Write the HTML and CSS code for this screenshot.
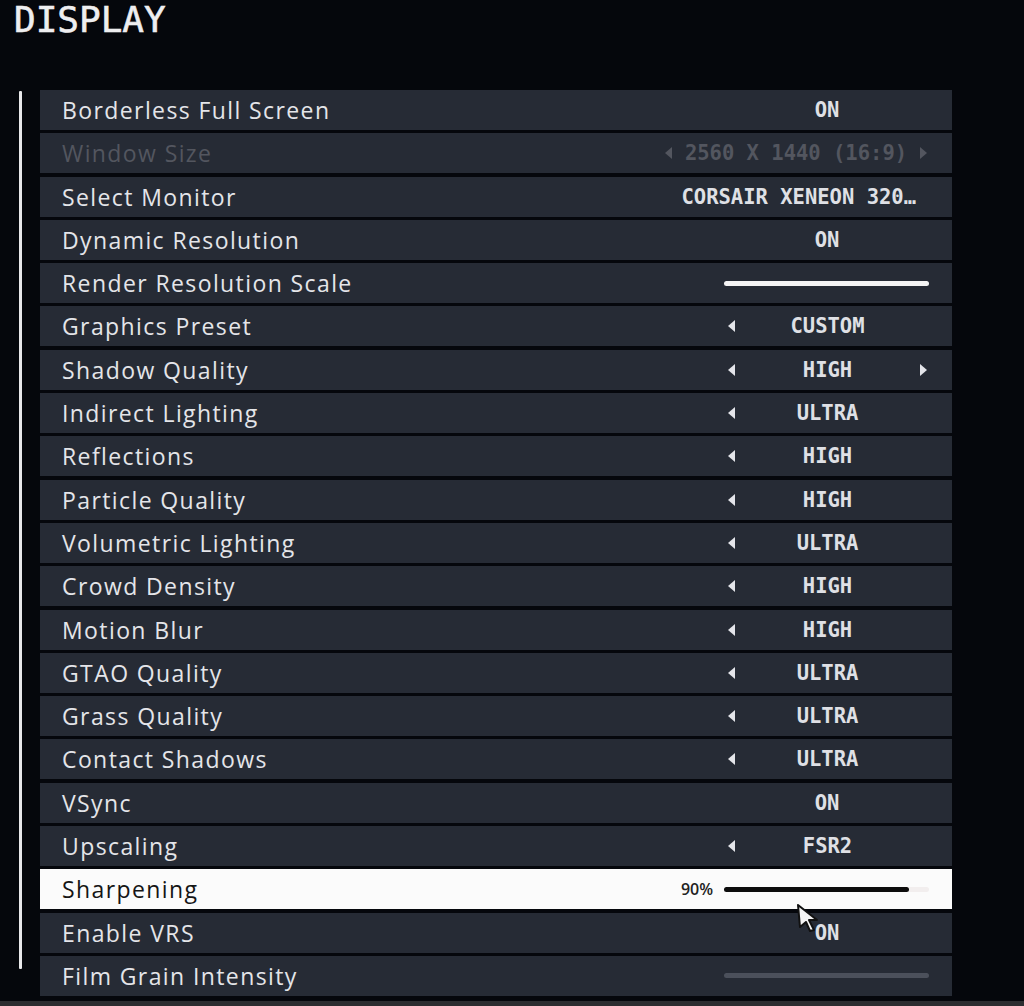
FILE: index.html
```html
<!DOCTYPE html>
<html lang="en">
<head>
    <meta charset="UTF-8">
    <title>Display</title>
    <link rel="stylesheet" href="styles.css">
</head>
<body>
    <h1 class="title">DISPLAY</h1>
    <div class="panel">
        <div class="rail"></div>
        <div class="rows">
            <div class="row"><span class="label">Borderless Full Screen</span><div class="value"><span class="text">ON</span></div></div>
            <div class="row disabled"><span class="label">Window Size</span><div class="value wide"><span class="arrow left"></span><span class="text">2560 X 1440 (16:9)</span><span class="arrow right"></span></div></div>
            <div class="row"><span class="label">Select Monitor</span><div class="value wide end"><span class="text">CORSAIR XENEON 320…</span></div></div>
            <div class="row"><span class="label">Dynamic Resolution</span><div class="value"><span class="text">ON</span></div></div>
            <div class="row"><span class="label">Render Resolution Scale</span><div class="value"><div class="slider"><div class="fill" style="width: 100%"></div></div></div></div>
            <div class="row"><span class="label">Graphics Preset</span><div class="value"><span class="arrow left"></span><span class="text">CUSTOM</span><span class="arrow none"></span></div></div>
            <div class="row"><span class="label">Shadow Quality</span><div class="value"><span class="arrow left"></span><span class="text">HIGH</span><span class="arrow right"></span></div></div>
            <div class="row"><span class="label">Indirect Lighting</span><div class="value"><span class="arrow left"></span><span class="text">ULTRA</span><span class="arrow none"></span></div></div>
            <div class="row"><span class="label">Reflections</span><div class="value"><span class="arrow left"></span><span class="text">HIGH</span><span class="arrow none"></span></div></div>
            <div class="row"><span class="label">Particle Quality</span><div class="value"><span class="arrow left"></span><span class="text">HIGH</span><span class="arrow none"></span></div></div>
            <div class="row"><span class="label">Volumetric Lighting</span><div class="value"><span class="arrow left"></span><span class="text">ULTRA</span><span class="arrow none"></span></div></div>
            <div class="row"><span class="label">Crowd Density</span><div class="value"><span class="arrow left"></span><span class="text">HIGH</span><span class="arrow none"></span></div></div>
            <div class="row"><span class="label">Motion Blur</span><div class="value"><span class="arrow left"></span><span class="text">HIGH</span><span class="arrow none"></span></div></div>
            <div class="row"><span class="label">GTAO Quality</span><div class="value"><span class="arrow left"></span><span class="text">ULTRA</span><span class="arrow none"></span></div></div>
            <div class="row"><span class="label">Grass Quality</span><div class="value"><span class="arrow left"></span><span class="text">ULTRA</span><span class="arrow none"></span></div></div>
            <div class="row"><span class="label">Contact Shadows</span><div class="value"><span class="arrow left"></span><span class="text">ULTRA</span><span class="arrow none"></span></div></div>
            <div class="row"><span class="label">VSync</span><div class="value"><span class="text">ON</span></div></div>
            <div class="row"><span class="label">Upscaling</span><div class="value"><span class="arrow left"></span><span class="text">FSR2</span><span class="arrow none"></span></div></div>
            <div class="row active"><span class="label">Sharpening</span><span class="pct">90%</span><div class="value"><div class="slider"><div class="fill" style="width: 90%"></div></div></div></div>
            <div class="row"><span class="label">Enable VRS</span><div class="value"><span class="text">ON</span></div></div>
            <div class="row"><span class="label">Film Grain Intensity</span><div class="value"><div class="slider dim"></div></div></div>
        </div>
    </div>
    <div class="footer-line"></div>
    <svg class="cursor" width="26" height="30" viewBox="0 0 26 30">
        <path d="M2 2 L21 17 L13 17 L18 27 L14 28 L10 19 L4 24 Z" fill="#f4f4f4" stroke="#111" stroke-width="2" stroke-linejoin="round"/>
    </svg>
</body>
</html>
```
FILE: styles.css
```css
body {
    margin: 0;
    background: #05070c;
    font-family: "Open Sans", "Liberation Sans", sans-serif;
    color: #e4e5e9;
    height: 1006px;
    overflow: hidden;
    position: relative;
}
.title {
    margin: 0;
    padding: 0 0 0 14px;
    height: 40px;
    line-height: 40px;
    font-family: "DejaVu Sans Mono", monospace;
    font-weight: normal;
    font-size: 36px;
    color: #eeeef0;
    -webkit-text-stroke: 0.6px #eeeef0;
}
.panel {
    display: flex;
    margin-top: 50px;
    padding-left: 19px;
}
.rail {
    width: 3px;
    height: 878px;
    margin-top: 1px;
    background: #e8e8ea;
    border-radius: 1px;
}
.rows {
    display: flex;
    flex-direction: column;
    gap: 3.3px;
    width: 912px;
    margin-left: 18px;
}
.row {
    display: flex;
    align-items: center;
    height: 40px;
    background: #262b35;
}
.label {
    flex: 1;
    padding-left: 22px;
    font-size: 23px;
    font-weight: 500;
    letter-spacing: 1.4px;
}
.value {
    display: flex;
    align-items: center;
    width: 212px;
    margin-right: 19px;
    font-family: "DejaVu Sans Mono", monospace;
    font-weight: bold;
    font-size: 20.5px;
    color: #dfe0e5;
}
.value .text {
    flex: 1;
    text-align: center;
}
.value.wide {
    width: 270px;
}
.value.end {
    width: 300px;
}
.value.end .text {
    text-align: right;
    white-space: nowrap;
    padding-right: 17px;
}
.arrow {
    width: 8px;
    height: 12px;
}
.arrow.left {
    margin-left: 7px;
    border-style: solid;
    border-width: 6px 7px 6px 0;
    border-color: transparent #e4e5ea transparent transparent;
    width: 0;
    height: 0;
}
.arrow.right {
    margin-right: 6px;
    border-style: solid;
    border-width: 6px 0 6px 7px;
    border-color: transparent transparent transparent #e4e5ea;
    width: 0;
    height: 0;
}
.arrow.none {
    width: 7px;
    margin-right: 6px;
}
.disabled .label,
.disabled .value {
    color: #53565f;
}
.disabled .arrow.left {
    border-right-color: #53565f;
    margin-left: 2px;
}
.disabled .arrow.right {
    border-left-color: #53565f;
}
.slider {
    flex: 1;
    height: 5px;
    margin: 0 4px 0 3px;
    border-radius: 3px;
    background: transparent;
}
.slider .fill {
    height: 100%;
    background: #f4f4f4;
    border-radius: 3px;
}
.slider.dim {
    background: #4b505b;
}
.active {
    background: #fbfbfb;
}
.active .label {
    color: #151515;
}
.active .slider {
    background: #f2eeee;
}
.active .slider .fill {
    background: #0d0d0d;
}
.pct {
    font-size: 16px;
    font-weight: 600;
    color: #222;
    margin-right: 8px;
}
.footer-line {
    position: absolute;
    left: 0;
    right: 0;
    bottom: 0;
    height: 5px;
    background: #2c2d30;
}
.cursor {
    position: absolute;
    left: 796px;
    top: 903px;
}
```
